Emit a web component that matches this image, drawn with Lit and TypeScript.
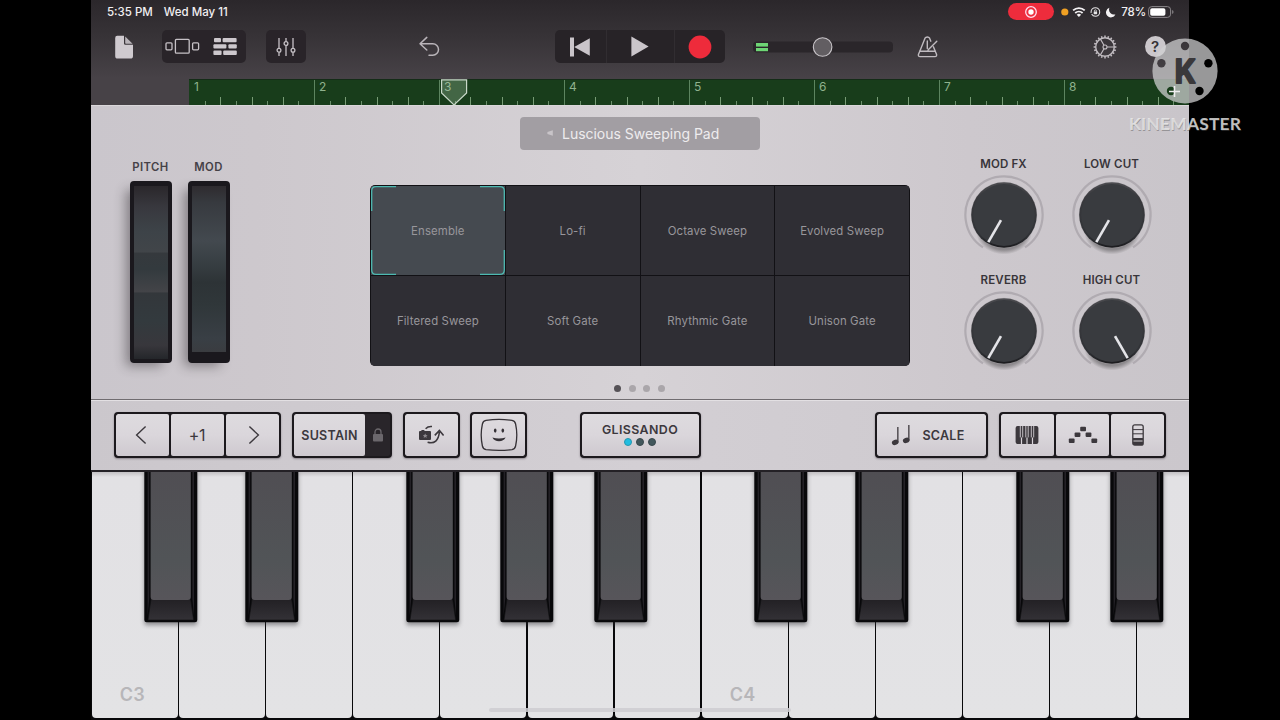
import { LitElement, html, svg, css } from 'lit';
import { customElement, property } from 'lit/decorators.js';
import { classMap } from 'lit/directives/class-map.js';

const PRESETS = [
  'Ensemble', 'Lo-fi', 'Octave Sweep', 'Evolved Sweep',
  'Filtered Sweep', 'Soft Gate', 'Rhythmic Gate', 'Unison Gate',
];

const KNOBS = [
  { label: 'MOD FX', angle: 30 },
  { label: 'LOW CUT', angle: 30 },
  { label: 'REVERB', angle: 30 },
  { label: 'HIGH CUT', angle: -30 },
];

const WHITE_KEYS = ['C3', '', '', '', '', '', '', 'C4', '', '', '', '', ''];
const BLACK_KEYS = [53, 154, 315, 409, 503, 663, 764, 925, 1019];

@customElement('status-bar')
export class StatusBar extends LitElement {
  static styles = css`
    :host {
      display: flex;
      align-items: center;
      height: 23px;
      padding: 0 15px 0 16px;
      color: #f1eff1;
      font-size: 11.5px;
      font-weight: 500;
    }
    .date { margin-left: 11px; }
    .spacer { flex: 1; }
    .recording {
      display: flex;
      align-items: center;
      justify-content: center;
      width: 46px;
      height: 17px;
      border-radius: 9px;
      background: #ee2c3c;
      margin-right: 7px;
    }
    svg { display: block; }
    .percent { margin-left: 4px; margin-right: 2px; letter-spacing: -0.1px; }
  `;

  render() {
    return html`
      <span>5:35 PM</span>
      <span class="date">Wed May 11</span>
      <span class="spacer"></span>
      <span class="recording">
        <svg width="14" height="14" viewBox="0 0 14 14">
          <circle cx="7" cy="7" r="5.3" fill="none" stroke="#fde" stroke-width="1.3" />
          <circle cx="7" cy="7" r="2.7" fill="#fff" />
        </svg>
      </span>
      <svg width="56" height="16" viewBox="0 0 56 16">
        <circle cx="3.8" cy="8" r="3.6" fill="#f0a023" />
        <g fill="none" stroke="#f4f2f4" stroke-width="1.8">
          <path d="M12.1 6.4a8.4 8.4 0 0 1 11.6 0" />
          <path d="M14.2 9a5.4 5.4 0 0 1 7.4 0" />
        </g>
        <path d="M15.7 10.7a3.3 3.3 0 0 1 4.4 0L17.9 13z" fill="#f4f2f4" />
        <circle cx="34.4" cy="8" r="4.3" fill="none" stroke="#e6e4e6" stroke-width="1.1" stroke-dasharray="11 1.2 14 0.8" />
        <rect x="32.7" y="7.5" width="3.4" height="2.7" rx=".4" fill="#e6e4e6" />
        <path d="M33.4 7.7V6.8a1 1 0 0 1 2 0v.9" fill="none" stroke="#e6e4e6" stroke-width=".8" />
        <path d="M48.4 3.8a4.9 4.9 0 1 0 6 6.6 5 5 0 0 1-6-6.6z" fill="#f4f2f4" />
      </svg>
      <span class="percent">78%</span>
      <svg width="26" height="12" viewBox="0 0 26 12">
        <rect x=".6" y=".6" width="22" height="10.8" rx="3.2" fill="none" stroke="#8b878b" />
        <rect x="2.2" y="2.2" width="15.2" height="7.6" rx="1.8" fill="#fff" />
        <path d="M24.2 4v4q1.3-.6 1.3-2t-1.3-2z" fill="#8b878b" />
      </svg>
    `;
  }
}

@customElement('tool-bar')
export class ToolBar extends LitElement {
  static styles = css`
    :host {
      display: flex;
      align-items: center;
      height: 56px;
      box-sizing: border-box;
      padding: 0 23px 9px 21px;
    }
    svg { display: block; flex: none; }
    .group {
      display: flex;
      flex: none;
      align-items: center;
      height: 33px;
      border-radius: 5px;
      background: #292429;
    }
    .views { width: 84px; margin-left: 28px; }
    .mixer { width: 40px; margin-left: 20px; justify-content: center; }
    .undo { margin-left: 111px; }
    .transport { width: 170px; margin-left: 113.5px; background: #272327; }
    .segment {
      display: flex;
      align-items: center;
      justify-content: center;
      height: 100%;
      box-sizing: border-box;
    }
    .segment + .segment { border-left: 1px solid #312d31; }
    .back { width: 51px; }
    .play { width: 68px; }
    .record { width: 51px; }
    .volume { margin-left: 28px; }
    .metronome { margin-left: 23px; }
    .gear { margin-left: 153px; }
    .help {
      flex: none;
      display: flex;
      align-items: center;
      justify-content: center;
      width: 21px;
      height: 21px;
      margin-left: 28px;
      border-radius: 50%;
      background: #cbc7cb;
      color: #363236;
      font-size: 15px;
      font-weight: 600;
    }
  `;

  renderGear() {
    const teeth = Array.from({ length: 20 }, (_, i) => i * 18);
    return html`
      <svg class="gear" width="24" height="24" viewBox="-12 -12 24 24">
        <g fill="none" stroke="#c3bec3">
          <circle r="9.3" stroke-width="1.4" />
          ${teeth.map((a) => svg`<path d="M0 -9.6V-11.4" stroke-width="1.5" transform="rotate(${a})" />`)}
          <circle r="2" stroke-width="1.1" />
          <path d="M2 0H9M-1 -1.8L-4.5 -7.8M-1 1.8L-4.5 7.8" stroke-width="1.2" />
        </g>
      </svg>
    `;
  }

  render() {
    return html`
      <svg width="22" height="24" viewBox="0 0 22 24">
        <path d="M5.2.8H12V8.4q0 1.4 1.4 1.4H21V21q0 2.6-2.6 2.6H5.6Q3.2 23.6 3.2 21V3Q3.2.8 5.2.8z" fill="#cfcacf" />
        <path d="M13.2 1.4L20.6 8.8H13.9Q13.2 8.8 13.2 8z" fill="#b9b4b9" />
      </svg>
      <div class="group views">
        <svg width="84" height="33" viewBox="0 0 84 33">
          <g fill="none" stroke="#c6c1c6" stroke-width="1.3">
            <rect x="13.4" y="9.4" width="13.8" height="13.8" rx="1" />
            <rect x="4" y="12.8" width="6" height="7" rx="1" />
            <rect x="30.6" y="12.8" width="6" height="7" rx="1" />
          </g>
          <g fill="#cdc8cd">
            <rect x="52" y="8" width="7" height="4.3" rx="1" />
            <rect x="60.6" y="8" width="14" height="4.3" rx="1" />
            <rect x="51.4" y="14.2" width="13" height="4.3" rx="1" />
            <rect x="66.4" y="14.2" width="8.4" height="4.3" rx="1" />
            <rect x="51.4" y="20.6" width="8.2" height="4.3" rx="1" />
            <rect x="61.2" y="20.6" width="13.6" height="4.3" rx="1" />
          </g>
        </svg>
      </div>
      <div class="group mixer">
        <svg width="20" height="20" viewBox="0 0 20 20">
          <g fill="none" stroke="#c6c1c6" stroke-width="1.3">
            <path d="M3 1V11.3M3 15.3V19M10 1V4.5M10 8.5V19M17 1V11.3M17 15.3V19" />
            <circle cx="3" cy="13.3" r="1.9" />
            <circle cx="10" cy="6.5" r="1.9" />
            <circle cx="17" cy="13.3" r="1.9" />
          </g>
        </svg>
      </div>
      <svg class="undo" width="24" height="22" viewBox="0 0 24 22">
        <path d="M9.8 1.4L3 7.8 9.8 14M3.2 7.8H15.8a5.7 5.7 0 0 1 0 11.4H12" fill="none" stroke="#b9b4b9" stroke-width="1.5" stroke-linecap="round" stroke-linejoin="round" />
      </svg>
      <div class="group transport">
        <div class="segment back">
          <svg width="20" height="20" viewBox="0 0 20 20">
            <path d="M0 .6H4V19.4H0zM19.8 1.2V18.8L4.2 10z" fill="#cac5ca" />
          </svg>
        </div>
        <div class="segment play">
          <svg width="18" height="21" viewBox="0 0 18 21"><path d="M.4.4L17.6 10.5.4 20.6z" fill="#cac5ca" /></svg>
        </div>
        <div class="segment record">
          <svg width="24" height="24" viewBox="0 0 24 24"><circle cx="12" cy="12" r="11.4" fill="#ee2b3b" /></svg>
        </div>
      </div>
      <svg class="volume" width="140" height="22" viewBox="0 0 140 22">
        <rect x="0" y="5.6" width="140" height="11" rx="4" fill="#2a262a" />
        <rect x="3" y="7" width="12" height="3.6" fill="#6ed675" />
        <rect x="3" y="12" width="12" height="3.2" fill="#6ed675" />
        <circle cx="69.6" cy="11" r="9.3" fill="#625e62" stroke="#c9c5c9" stroke-width="1.1" />
      </svg>
      <svg class="metronome" width="24" height="22" viewBox="0 0 24 22">
        <g fill="none" stroke="#c0bbc0" stroke-width="1.4" stroke-linejoin="round" stroke-linecap="round">
          <path d="M14.8 5.2L13.6 2.2Q12.9 1 11.3 1T9 2.2L4 14.8 2.4 18.6Q2.2 20.6 4 20.6H19Q20.8 20.6 20.6 18.6L17.4 10.8" />
          <path d="M3.8 15.2H19M11.3 5V12.4M12 14L20.8 5.2" />
        </g>
      </svg>
      ${this.renderGear()}
      <div class="help">?</div>
    `;
  }
}

@customElement('time-ruler')
export class TimeRuler extends LitElement {
  static styles = css`
    :host {
      display: block;
      position: relative;
      height: 26px;
      padding-left: 98px;
    }
    .track {
      display: flex;
      height: 26px;
      overflow: hidden;
      background: #183d1b;
      border-top: 1px solid #142c17;
      box-sizing: border-box;
    }
    .measure {
      flex: none;
      width: 125px;
      display: grid;
      grid-template-columns: repeat(8, 1fr);
      align-items: end;
      position: relative;
    }
    .tick { width: 1px; height: 4px; background: #6b8f6b; }
    .tick:nth-child(odd) { height: 8px; background: #789c76; }
    .tick:first-child { height: 25px; background: #5d8560; }
    .measure.first .tick:first-child { visibility: hidden; }
    .number {
      position: absolute;
      left: 5px;
      top: -1px;
      font-size: 12px;
      color: #8fb28d;
    }
    .playhead { position: absolute; left: 349px; top: 0; }
  `;

  render() {
    return html`
      <div class="track">
        ${[1, 2, 3, 4, 5, 6, 7, 8].map((n) => html`
          <div class=${classMap({ measure: true, first: n === 1 })}>
            ${Array.from({ length: 8 }, () => html`<span class="tick"></span>`)}
            <span class="number">${n}</span>
          </div>
        `)}
      </div>
      <svg class="playhead" width="28" height="27" viewBox="0 0 28 27">
        <path d="M1.6.8H26.6V14L14 26 1.6 14z" fill="#a9c8a9" fill-opacity=".3" stroke="#c9d8c9" stroke-width="1.2" />
      </svg>
    `;
  }
}

@customElement('rotary-knob')
export class RotaryKnob extends LitElement {
  @property() label = '';
  @property({ type: Number }) angle = 0;

  static styles = css`
    :host {
      display: flex;
      flex-direction: column;
      align-items: center;
      height: 116px;
      font-size: 11.5px;
      font-weight: 600;
      letter-spacing: 0.15px;
      line-height: 16px;
      color: #38353a;
      white-space: nowrap;
    }
    svg { display: block; }
  `;

  render() {
    return html`
      <span>${this.label}</span>
      <svg width="86" height="86" viewBox="-43 -43 86 86">
        <defs>
          <radialGradient id="shade">
            <stop offset="0" stop-color="#000" stop-opacity=".6" />
            <stop offset=".8" stop-color="#000" stop-opacity=".3" />
            <stop offset="1" stop-color="#000" stop-opacity="0" />
          </radialGradient>
          <linearGradient id="cap" x1="0" y1="0" x2="0" y2="1">
            <stop offset="0" stop-color="#4c4c50" />
            <stop offset=".25" stop-color="#39393d" />
            <stop offset=".8" stop-color="#313337" />
            <stop offset="1" stop-color="#1b1b1e" />
          </linearGradient>
        </defs>
        <path d="M-21 32.4A38.6 38.6 0 1 1 21 32.4" fill="none" stroke="#b0abb1" stroke-width="2.2" />
        <ellipse cx="0" cy="16.5" rx="28" ry="23" fill="url(#shade)" />
        <circle r="33.2" fill="#aaa6aa" fill-opacity=".5" />
        <circle r="32.8" fill="url(#cap)" />
        <circle r="30.9" fill="#393b3f" />
        <path d="M0 6V31.4" transform="rotate(${this.angle})" stroke="#e4e4e8" stroke-width="2.6" />
      </svg>
    `;
  }
}

@customElement('sound-panel')
export class SoundPanel extends LitElement {
  static styles = css`
    :host {
      display: grid;
      grid-template-columns: 279px 540px 279px;
      height: 295px;
      box-sizing: border-box;
      border-top: 1px solid #dad7da;
      border-bottom: 1px solid #706c70;
      background: linear-gradient(90deg, #cac6cc 0%, #cdc8cd 15%, #d6d2d6 50%, #cdc8cd 80%, #c9c5ca 100%);
    }
    .wheels {
      display: flex;
      gap: 16px;
      padding: 52px 0 0 39px;
      align-items: flex-start;
    }
    .wheel {
      width: 42px;
      display: flex;
      flex-direction: column;
      align-items: center;
      gap: 5px;
      font-size: 11.3px;
      font-weight: 600;
      letter-spacing: 0.4px;
      line-height: 18px;
      color: #454147;
    }
    .wheel-label { padding-right: 1px; }
    .wheel-body {
      width: 42px;
      height: 182px;
      box-sizing: border-box;
      border: 4px solid #1a181d;
      border-top-width: 5px;
      border-radius: 4px;
      background: linear-gradient(#2a272b 0%, #38383e 12%, #3d4348 26%, #414549 38%, #35393d 39%, #333a3e 48%, #434448 61%, #33373b 62%, #333a3e 78%, #38373c 92%, #24262a 100%);
      box-shadow: -7px 6px 12px -3px rgba(40, 35, 40, 0.45);
    }
    .wheel-body.mod {
      border-bottom-width: 11px;
      background: linear-gradient(#2e2b2f 0%, #373a3f 10%, #43494f 33%, #363d41 48%, #2d3336 58%, #30373a 72%, #393f45 92%, #3a3c40 100%);
    }
    .center {
      display: flex;
      flex-direction: column;
      align-items: center;
      padding-top: 11px;
    }
    .patch {
      display: flex;
      align-items: center;
      width: 240px;
      height: 33px;
      box-sizing: border-box;
      padding: 0 0 1px 26px;
      gap: 8px;
      border-radius: 4px;
      background: #a29ea3;
      color: #eeecee;
      font-size: 14px;
      letter-spacing: -0.02px;
      white-space: nowrap;
    }
    .arrow {
      width: 8px;
      height: 8px;
      display: block;
    }
    .presets {
      display: grid;
      grid-template-columns: repeat(4, 1fr);
      grid-template-rows: 89px 90px;
      gap: 1px;
      width: 540px;
      height: 181px;
      box-sizing: border-box;
      margin-top: 35px;
      padding: 1px 1px 0;
      border-radius: 5px;
      overflow: hidden;
      background: #121115;
    }
    .preset {
      display: flex;
      align-items: center;
      justify-content: center;
      background: #2f2e34;
      color: #98969b;
      font-size: 11.4px;
      letter-spacing: 0.12px;
      position: relative;
    }
    .preset.selected { background: #454a50; }
    .corners { position: absolute; inset: 0; }
    .pages { display: flex; gap: 7.4px; margin-top: 19px; padding-right: 1px; }
    .page { width: 7px; height: 7px; border-radius: 50%; background: #aaa6aa; }
    .page.current { background: #555156; }
    .knobs {
      display: grid;
      grid-template-columns: 108px 108px;
      grid-auto-rows: 116px;
      padding: 50px 0 0 39.5px;
    }
  `;

  render() {
    return html`
      <div class="wheels">
        <div class="wheel"><span class="wheel-label">PITCH</span><div class="wheel-body"></div></div>
        <div class="wheel"><span class="wheel-label">MOD</span><div class="wheel-body mod"></div></div>
      </div>
      <div class="center">
        <div class="patch">
          <svg class="arrow" viewBox="0 0 8 8"><path d="M6.8 1.2V6.8L1.4 5V3z" fill="#c8c4c8" /></svg>
          Luscious Sweeping Pad
        </div>
        <div class="presets">
          ${PRESETS.map((name, i) => html`
            <div class=${classMap({ preset: true, selected: i === 0 })}>
              ${i === 0 ? html`
                <svg class="corners" width="134" height="89" viewBox="0 0 134 89">
                  <path d="M25 .7H5Q.7.7.7 5V25M109 .7H129Q133.3.7 133.3 5V25M.7 64V84Q.7 88.3 5 88.3H25M109 88.3H129Q133.3 88.3 133.3 84V64" fill="none" stroke="#4db9b1" stroke-width="1.3" />
                </svg>` : ''}
              ${name}
            </div>
          `)}
        </div>
        <div class="pages">
          ${[0, 1, 2, 3].map((i) => html`<span class=${classMap({ page: true, current: i === 0 })}></span>`)}
        </div>
      </div>
      <div class="knobs">
        ${KNOBS.map((k) => html`<rotary-knob .label=${k.label} .angle=${k.angle}></rotary-knob>`)}
      </div>
    `;
  }
}

@customElement('control-strip')
export class ControlStrip extends LitElement {
  static styles = css`
    :host {
      display: flex;
      align-items: flex-start;
      height: 70px;
      box-sizing: border-box;
      padding: 12px 23px 0;
      border-top: 1px solid #e3e0e3;
      background: linear-gradient(90deg, #cbc7cc, #d3cfd4 50%, #cbc7cc);
      color: #3c383d;
      font-weight: 600;
    }
    svg { display: block; }
    .box {
      display: flex;
      flex: none;
      height: 46px;
      margin-top: -1px;
      box-sizing: border-box;
      border: 2px solid #1c191d;
      border-radius: 4px;
      overflow: hidden;
      background: #1c191d;
      box-shadow: 0 1px 2px rgba(60, 50, 60, 0.45);
      gap: 2px;
    }
    .cell {
      flex: 1;
      display: flex;
      align-items: center;
      justify-content: center;
      border-radius: 2px;
      background: linear-gradient(#dedbdf, #dad6db 50%, #cec9cf);
      font-size: 12.5px;
      letter-spacing: 0.25px;
    }
    .octave { width: 167px; display: grid; grid-template-columns: repeat(3, 1fr); }
    .prev { padding-right: 4px; }
    .next { padding-left: 2px; }
    .value { font-size: 16px; font-weight: 400; letter-spacing: -0.3px; padding-right: 1px; }
    .sustain { width: 100px; margin-left: 11px; gap: 0; background: #29252a; }
    .lock { width: 25px; display: flex; align-items: center; justify-content: center; }
    .flip { width: 57px; margin-left: 10.5px; }
    .face { width: 57px; margin-left: 10.5px; }
    .glissando { width: 121px; margin-left: 52.5px; }
    .glissando .cell { flex-direction: column; gap: 1px; font-size: 12.4px; line-height: 15px; padding-bottom: 2px; letter-spacing: 0.4px; }
    .dots { display: flex; gap: 4px; padding-right: 1px; }
    .dot { width: 8px; height: 8px; box-sizing: border-box; border-radius: 50%; background: #42575c; border: 1px solid #38484d; }
    .dot.on { background: #22bde0; border-color: #2596b0; }
    .scale { width: 113px; margin-left: 174.5px; }
    .scale .cell { gap: 11px; padding-right: 7px; }
    .modes { width: 167px; margin-left: 11px; }
  `;

  render() {
    return html`
      <div class="box octave">
        <div class="cell prev">
          <svg width="12" height="20" viewBox="0 0 12 20"><path d="M10.6 1.5L1.6 10l9 8.5" fill="none" stroke="#3c383d" stroke-width="1.4" /></svg>
        </div>
        <div class="cell value">+1</div>
        <div class="cell next">
          <svg width="12" height="20" viewBox="0 0 12 20"><path d="M1.4 1.5l9 8.5-9 8.5" fill="none" stroke="#3c383d" stroke-width="1.4" /></svg>
        </div>
      </div>
      <div class="box sustain">
        <div class="cell">SUSTAIN</div>
        <div class="lock">
          <svg width="12" height="14" viewBox="0 0 12 14">
            <rect x="1" y="6" width="10" height="7.4" rx="1" fill="#6b676c" />
            <path d="M3 6.4V4a3 3 0 0 1 6 0V6.4" fill="none" stroke="#6b676c" stroke-width="1.3" />
          </svg>
        </div>
      </div>
      <div class="box flip">
        <div class="cell">
          <svg width="28" height="20" viewBox="0 0 28 20">
            <path d="M2 6H4.4V5H7.4V6H13Q14 6 14 7V14Q14 15 13 15H3Q2 15 2 14V7Q2 6 3 6z" fill="#3c383d" />
            <path d="M8.2 8.4L9 9.9 10.6 10.2 9.4 11.3 9.7 12.9 8.2 12.1 6.7 12.9 7 11.3 5.8 10.2 7.4 9.9z" fill="#8b878c" />
            <path d="M8.6 3.8Q11 1.2 15 1.6" fill="none" stroke="#3c383d" stroke-width="1.5" />
            <path d="M10.6 17.2Q21 20 22.4 7M17.8 10.4L22.4 5.4 26.6 10.4" fill="none" stroke="#3c383d" stroke-width="1.6" />
          </svg>
        </div>
      </div>
      <div class="box face">
        <div class="cell">
          <svg width="38" height="34" viewBox="0 0 38 34">
            <path d="M6 2.4Q19 .4 32 2.4 35 3 35.6 6 38 17 35.6 28 35 31 32 31.6 19 33.2 6 31.6 3 31 2.4 28 0 17 2.4 6 3 3 6 2.4z" fill="none" stroke="#353136" stroke-width="1.3" />
            <ellipse cx="15.2" cy="12.6" rx="1.3" ry="2.1" fill="#353136" />
            <ellipse cx="22.8" cy="12.6" rx="1.3" ry="2.1" fill="#353136" />
            <path d="M12.4 19.4Q19 21.6 25.6 19.4 23.6 23.2 19 23.2T12.4 19.4z" fill="#353136" />
          </svg>
        </div>
      </div>
      <div class="box glissando">
        <div class="cell">
          GLISSANDO
          <div class="dots"><span class="dot on"></span><span class="dot"></span><span class="dot"></span></div>
        </div>
      </div>
      <div class="box scale">
        <div class="cell">
          <svg width="20" height="22" viewBox="0 0 20 22">
            <g fill="#3c383d">
              <ellipse cx="4.2" cy="18.4" rx="3.4" ry="2.6" transform="rotate(-20 4.2 18.4)" />
              <ellipse cx="15.2" cy="16.4" rx="3.4" ry="2.6" transform="rotate(-20 15.2 16.4)" />
              <path d="M6.2 3H7.5V18.4H6.2zM17.2 1H18.5V16.4H17.2z" />
            </g>
          </svg>
          SCALE
        </div>
      </div>
      <div class="box modes">
        <div class="cell">
          <svg width="26" height="20" viewBox="0 0 26 20">
            <rect x=".6" y="1" width="22.8" height="18" rx="2" fill="#3c383d" />
            <path d="M5.3 1V12.4M7.7 1V12.4M10.8 1V12.4M13.2 1V12.4M16.3 1V12.4M18.7 1V12.4" stroke="#d0ccd1" stroke-width=".9" />
            <path d="M6.5 12.4V19M12 12.4V19M17.5 12.4V19" stroke="#d9d5da" stroke-width="1.2" />
          </svg>
        </div>
        <div class="cell">
          <svg width="30" height="18" viewBox="0 0 30 18">
            <g fill="#3c383d">
              <rect x="12.2" y=".8" width="5.8" height="4.4" rx="1" />
              <rect x="6.6" y="6.6" width="5.8" height="4.4" rx="1" />
              <rect x="17.6" y="6.6" width="5.8" height="4.4" rx="1" />
              <rect x=".8" y="12.6" width="5.8" height="4.4" rx="1" />
              <rect x="23.4" y="12.6" width="5.8" height="4.4" rx="1" />
            </g>
          </svg>
        </div>
        <div class="cell">
          <svg width="12" height="22" viewBox="0 0 12 22">
            <rect x=".8" y=".8" width="10.4" height="20.4" rx="2" fill="none" stroke="#3c383d" stroke-width="1.3" />
            <path d="M1 5.6H11M1 9.8H11" stroke="#3c383d" stroke-width="1" />
            <path d="M1 14H11V16.5H1zM1 17.4H11V20Q11 21 10 21H2Q1 21 1 20z" fill="#3c383d" />
          </svg>
        </div>
      </div>
    `;
  }
}

@customElement('piano-keys')
export class PianoKeys extends LitElement {
  static styles = css`
    :host {
      display: block;
      position: relative;
      height: 250px;
      box-sizing: border-box;
      border-top: 2px solid #242126;
      overflow: hidden;
      background: #08080a;
    }
    .whites { display: flex; gap: 1.4px; height: 246px; padding-left: 0.8px; }
    .white {
      flex: none;
      width: 85.75px;
      display: flex;
      align-items: flex-end;
      box-sizing: border-box;
      padding: 0 0 13px 28px;
      border-radius: 0 0 4px 4px;
      background: linear-gradient(#c2c0c3, #e2e1e4 5px, #e3e3e5);
      color: #b7b6b9;
      font-size: 18px;
      font-weight: 600;
      letter-spacing: 0.3px;
    }
    .black { position: absolute; top: -2px; filter: drop-shadow(0 3px 2px rgba(40, 40, 45, 0.45)); }
    .home {
      position: absolute;
      left: 398px;
      bottom: 8px;
      width: 302px;
      height: 4px;
      border-radius: 2px;
      background: rgba(206, 205, 209, 0.85);
    }
  `;

  render() {
    return html`
      <div class="whites">${WHITE_KEYS.map((name) => html`<div class="white">${name}</div>`)}</div>
      ${BLACK_KEYS.map((x) => html`
        <svg class="black" style="left:${x}px" width="54" height="153" viewBox="0 0 54 153">
          <defs>
            <linearGradient id="top" x1="0" y1="0" x2="0" y2="1">
              <stop offset="0" stop-color="#504e53" />
              <stop offset=".7" stop-color="#515457" />
              <stop offset="1" stop-color="#57555a" />
            </linearGradient>
            <linearGradient id="lip" x1="0" y1="0" x2="0" y2="1">
              <stop offset="0" stop-color="#222024" />
              <stop offset="1" stop-color="#333136" />
            </linearGradient>
          </defs>
          <path d="M.3 0H53.3V150Q53.3 152.3 51 152.3H2.6Q.3 152.3.3 150z" fill="#08080a" />
          <path d="M3.6 0H5.2V129L3.6 146zM50 0H48.4V129L50 146z" fill="#232126" />
          <path d="M7 129H46.6L49.6 150H4z" fill="url(#lip)" stroke="#111013" stroke-width=".6" />
          <path d="M6.6 0H46.8V127Q46.8 130 43.6 130H9.8Q6.6 130 6.6 127z" fill="url(#top)" />
        </svg>
      `)}
      <div class="home"></div>
    `;
  }
}

@customElement('app-root')
export class AppRoot extends LitElement {
  static styles = css`
    :host {
      display: flex;
      justify-content: center;
      position: relative;
      width: 1280px;
      height: 720px;
      overflow: hidden;
      background: #000;
      font-family: Inter, 'Liberation Sans', sans-serif;
    }
    .screen { width: 1098px; height: 720px; }
    .header { background: linear-gradient(#2b272b, #373337 35%, #474247 78px, #474247); }
    .watermark { position: absolute; left: 1124px; top: 34px; }
  `;

  renderWatermark() {
    return html`
      <svg class="watermark" width="122" height="104" viewBox="0 0 122 104">
        <mask id="reel">
          <circle cx="61" cy="37" r="32.6" fill="#fff" />
          <g fill="#000">
            <circle cx="61" cy="12" r="4.2" />
            <circle cx="37.4" cy="29.3" r="4.2" />
            <circle cx="84.4" cy="29.3" r="4.2" />
            <circle cx="47" cy="57" r="4.2" />
            <circle cx="75.5" cy="57" r="4.2" />
          </g>
        </mask>
        <rect width="122" height="80" fill="#d0d0d2" fill-opacity=".73" mask="url(#reel)" />
        <text x="50.8" y="49.2" font-size="33" font-weight="700" fill="#3a383b" stroke="#3a383b" stroke-width="2" stroke-linejoin="round" textLength="21" lengthAdjust="spacingAndGlyphs">K</text>
        <path d="M50.5 52V63M45 57.5H56" stroke="#efedef" stroke-width="1.6" />
        <g font-size="17.4" font-weight="700" font-family="Lato, sans-serif">
          <text x="5.4" y="97" fill="#555" fill-opacity=".45" textLength="112">KINEMASTER</text>
          <text x="5" y="96" fill="#ececec" fill-opacity=".78" textLength="112">KINEMASTER</text>
        </g>
      </svg>
    `;
  }

  render() {
    return html`
      <main class="screen">
        <div class="header">
          <status-bar></status-bar>
          <tool-bar></tool-bar>
          <time-ruler></time-ruler>
        </div>
        <sound-panel></sound-panel>
        <control-strip></control-strip>
        <piano-keys></piano-keys>
      </main>
      ${this.renderWatermark()}
    `;
  }
}
